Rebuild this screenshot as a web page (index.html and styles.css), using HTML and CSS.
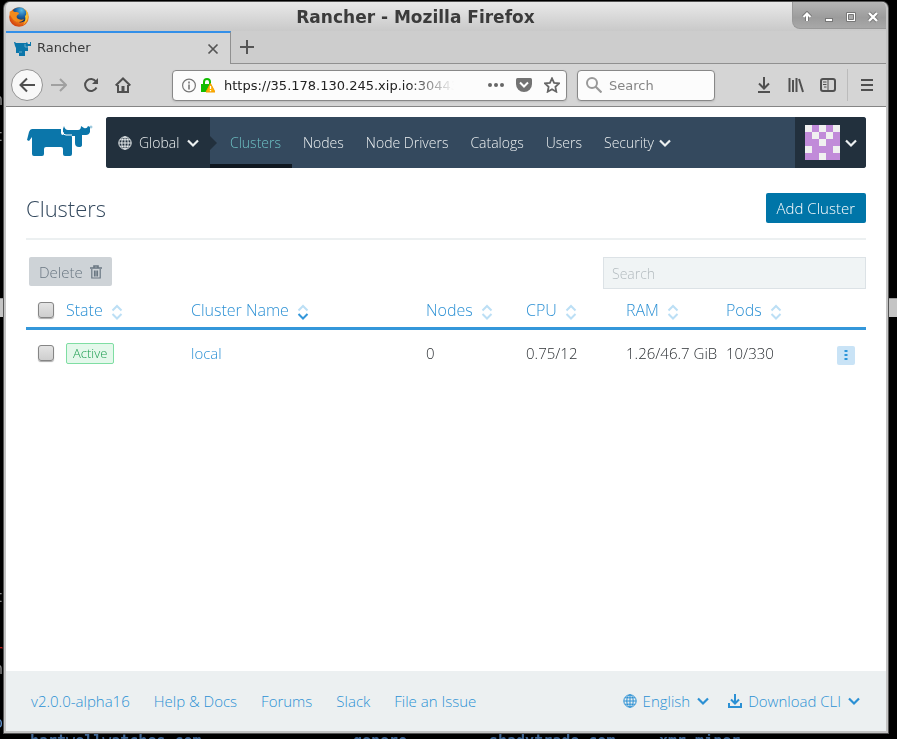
FILE: index.html
```html
<!DOCTYPE html>
<html lang="en">
<head>
<meta charset="utf-8">
<title>Rancher</title>
<link rel="stylesheet" href="styles.css">
</head>
<body>
<svg class="sprite" aria-hidden="true">
  <symbol id="chevron" viewBox="0 0 14 14"><path d="M2 4.500l5 5 5-5" fill="none" stroke="currentColor" stroke-width="2.200"/></symbol>
  <symbol id="globe" viewBox="0 0 14 14"><g fill="none" stroke="currentColor"><circle cx="7" cy="7" r="6.200"/><ellipse cx="7" cy="7" rx="3.200" ry="6.200"/><path d="M7 1v12M1 7h12M2 3.800h10M2 10.200h10"/></g></symbol>
  <symbol id="sort" viewBox="0 0 12 16"><g fill="none" stroke="currentColor" stroke-width="2"><path d="M1.500 6.500L6 2l4.500 4.500"/><path d="M1.500 10L6 14.500 10.500 10"/></g></symbol>
</svg>
<pre class="terminal terminal-upper" aria-hidden="true">n

t</pre>
<pre class="terminal terminal-lower" aria-hidden="true">t


<span class="error">r</span>
n


<span class="entry">o</span></pre>
<div class="terminal terminal-bottom" aria-hidden="true"><span>hartwellwatches.com</span><span>genero</span><span>shadytrade.com</span><span>xmr miner</span></div>
<div class="terminal-band" aria-hidden="true"></div>
<div class="window">
  <header class="titlebar">
    <svg class="firefox" viewBox="0 0 20 20"><defs><radialGradient id="fox" cx=".65" cy=".3" r=".8"><stop offset="0" stop-color="#ffd23a"/><stop offset=".5" stop-color="#f4851b"/><stop offset="1" stop-color="#c9330c"/></radialGradient><radialGradient id="sea" cx=".6" cy=".2" r=".8"><stop offset="0" stop-color="#58b9e4"/><stop offset=".5" stop-color="#1c66a9"/><stop offset="1" stop-color="#10264f"/></radialGradient></defs><circle cx="10" cy="10" r="9.800" fill="url(#fox)"/><path d="M4 3C7 0 13-1 16 3c3 3 3 8 0 11-3 2-7 2-9-1z" fill="url(#sea)"/><path d="M1 4c1 1 3 0 5 1 2 0 4 0 4 2-2 1-3 2-2 4 2 2 5 2 7 1-2 4-9 4-12-1C1 9 0 6 1 4z" fill="#f28a1c"/><path d="M17 3c3 4 3 11-3 15 2-3 3-6 2-9 2-1 1-4 1-6z" fill="#fbc231"/></svg>
    <h2 class="window-title">Rancher - Mozilla Firefox</h2>
    <div class="window-buttons">
      <button aria-label="Shade"><svg viewBox="0 0 12 12"><path d="M6 10V3M2.500 6L6 2.500 9.500 6" fill="none" stroke="#777" stroke-width="4"/><path d="M6 10V3M2.500 6L6 2.500 9.500 6" fill="none" stroke="#fff" stroke-width="2"/></svg></button>
      <button aria-label="Minimize"><svg viewBox="0 0 12 12"><rect x="2.500" y="7.500" width="7" height="3" fill="#fff" stroke="#777"/></svg></button>
      <button aria-label="Maximize"><svg viewBox="0 0 12 12"><path d="M1.500 1.500h9v9h-9z" fill="#fff" stroke="#777"/><path d="M3.500 3.500h5v5h-5z" fill="#aaa" stroke="#777"/></svg></button>
      <button aria-label="Close"><svg viewBox="0 0 12 12"><path d="M2 2l8 8M10 2l-8 8" stroke="#777" stroke-width="4"/><path d="M2 2l8 8M10 2l-8 8" stroke="#fff" stroke-width="2.400"/></svg></button>
    </div>
  </header>
  <div class="tabs">
    <div class="tab">
      <svg class="favicon" viewBox="0 0 18 16"><path d="M0 1h1l1 1h10l1-1 1 2h2V1h1v4h-3v5h-3v5H5v-3H2V7L1 5z" fill="#0b76aa"/><path d="M5 11h3M11 3v3h3" fill="none" stroke="#7cb6d0" stroke-width=".800"/></svg>
      <span>Rancher</span>
      <button aria-label="Close tab"><svg viewBox="0 0 12 12"><path d="M1.500 1.500l9 9M10.500 1.500l-9 9" stroke="#555" stroke-width="1.700"/></svg></button>
    </div>
    <button class="new-tab" aria-label="New tab"><svg viewBox="0 0 14 14"><path d="M7 0v14M0 7h14" stroke="#555" stroke-width="2"/></svg></button>
  </div>
  <div class="toolbar">
    <button class="back" aria-label="Back"><svg viewBox="0 0 16 16"><path d="M16 8H1.500M8 1.500L1.500 8 8 14.500" fill="none" stroke="#505050" stroke-width="2"/></svg></button>
    <button class="tool" aria-label="Forward"><svg viewBox="0 0 16 16"><path d="M0 8h14.500M9 2l6 6-6 6" fill="none" stroke="#a0a0a0" stroke-width="2"/></svg></button>
    <button class="tool" aria-label="Reload"><svg viewBox="0 0 16 16"><path d="M13.500 10.500A6 6 0 1 1 13 4.500" fill="none" stroke="#505050" stroke-width="2"/><path d="M15 1v6H9z" fill="#505050"/></svg></button>
    <button class="tool" aria-label="Home"><svg viewBox="0 0 16 16"><path d="M.700 8.500L8 1.500l7.300 7M3 8v7h10V8" fill="none" stroke="#505050" stroke-width="2"/><path d="M6.500 9h3v6h-3z" fill="#505050"/></svg></button>
    <div class="address">
      <svg viewBox="0 0 14 14"><circle cx="7" cy="7" r="6.400" fill="none" stroke="#777" stroke-width="1.200"/><path d="M7 6v5M7 3v2" stroke="#777" stroke-width="1.600"/></svg>
      <svg class="lock" viewBox="0 0 14 15"><path d="M3 7V4a3 3 0 0 1 6 0v3" fill="none" stroke="#12bc00" stroke-width="2"/><path d="M0 6h8v8H0z" fill="#12bc00"/><path d="M9.500 5.500L14 14H5z" fill="#ffb000" stroke="#f29d00"/><path d="M9.500 8v3M9.500 12v1.300" stroke="#fff" stroke-width="1.300"/></svg>
      <input class="url" aria-label="Address" value="https://35.178.130.245.xip.io:30443">
      <button aria-label="Page actions"><svg viewBox="0 0 16 16"><g fill="#666"><circle cx="2" cy="8" r="2"/><circle cx="8" cy="8" r="2"/><circle cx="14" cy="8" r="2"/></g></svg></button>
      <button aria-label="Save to Pocket"><svg viewBox="0 0 16 16"><path d="M1.500 1h13Q16 1 16 2.500V7a8 8 0 0 1-16 0V2.500Q0 1 1.500 1z" fill="#737373"/><path d="M4 5.500l4 4 4-4" fill="none" stroke="#fff" stroke-width="2"/></svg></button>
      <button aria-label="Bookmark"><svg viewBox="0 0 16 16"><path d="M8 1.300l2.100 4.500 4.900.6-3.600 3.400.9 4.900L8 12.300l-4.300 2.400.9-4.900L1 6.400l4.900-.6z" fill="none" stroke="#666" stroke-width="1.800"/></svg></button>
    </div>
    <label class="websearch"><svg viewBox="0 0 16 16"><circle cx="6" cy="6" r="5" fill="none" stroke="#999" stroke-width="2"/><path d="M9.500 9.500l6 6" stroke="#999" stroke-width="2.200"/></svg><input aria-label="Web search" placeholder="Search"></label>
    <div class="tools">
      <button aria-label="Downloads"><svg viewBox="0 0 16 16"><path d="M8 0v11M3 6.500l5 5 5-5M2 15h12" fill="none" stroke="#505050" stroke-width="2"/></svg></button>
      <button aria-label="Library"><svg viewBox="0 0 16 16"><path d="M1.500 1v14M5 3v12M8.500 1v14M11 2l4 13" fill="none" stroke="#505050" stroke-width="2"/></svg></button>
      <button aria-label="Sidebar"><svg viewBox="0 0 16 16"><rect x="1" y="2" width="14" height="12" rx="2" fill="none" stroke="#505050" stroke-width="2"/><path d="M8 2v12M3 5h3.500M3 7.500h3.500M4 10h2.500" stroke="#505050"/></svg></button>
    </div>
    <button class="menu" aria-label="Menu"><svg viewBox="0 0 12 12"><path d="M0 1h12M0 6h12M0 11h12" stroke="#505050" stroke-width="2"/></svg></button>
  </div>
  <div class="page">
    <div class="nav-row">
      <a class="logo" href="#" aria-label="Rancher"><svg viewBox="0 0 67 32"><path d="M6 4h29v4q0 2 2 2h7q2 0 2 2v17q0 2-2 2h-5q-2 0-2-2v-5q0-2-2-2H20q-2 0-2 2v5q0 2-2 2h-8q-2 0-2-2V12l-3 4-2-1 2-8q1-3 3-3z" fill="#0b76aa"/><path d="M38 1q1 4 4 4h10q3 0 3-4l3 2q3 1 4-2l2 1v5q-1 3-4 3h-4v10q0 2-3 2-4 0-4-4v-7H40q-3 0-3-3V4z" fill="#0b76aa"/><path d="M37 7q0 3 3 3h6" fill="none" stroke="#fff"/><circle cx="65" cy="2" r="1" fill="none" stroke="#59a3c5" stroke-width=".700"/></svg></a>
      <nav class="nav">
        <button class="scope"><svg class="icon"><use href="#globe"/></svg><span>Global</span><svg class="icon"><use href="#chevron"/></svg></button>
        <a class="active" href="#">Clusters</a><a href="#">Nodes</a><a href="#">Node Drivers</a><a href="#">Catalogs</a><a href="#">Users</a>
        <button class="security">Security <svg class="icon"><use href="#chevron"/></svg></button>
        <button class="user" aria-label="Account"><svg class="avatar" viewBox="0 0 5 5" shape-rendering="crispEdges"><path d="M0 0h5v5H0z" fill="#c18bd9"/><path d="M0 0h1v1H0zM2 0h1v1H2zM4 0h1v1H4zM1 1h1v1H1zM3 1h1v1H3zM2 2h1v1H2zM0 3h1v1H0zM4 3h1v1H4zM2 4h1v1H2z" fill="#f0f0f0"/></svg><svg class="icon"><use href="#chevron"/></svg></button>
      </nav>
    </div>
    <main>
      <div class="heading"><h1>Clusters</h1><button class="add">Add Cluster</button></div>
      <div class="filters">
        <button class="delete" disabled>Delete <svg viewBox="0 0 12 14"><path d="M0 3h12M4 2.500V1h4v1.500" fill="none" stroke="currentColor" stroke-width="1.600"/><path d="M1.800 4v9h8.400V4M4.500 5.500v6M6 5.500v6M7.500 5.500v6" fill="none" stroke="currentColor" stroke-width="1.200"/></svg></button>
        <input class="search" type="search" aria-label="Search clusters" placeholder="Search">
      </div>
      <table>
        <colgroup><col class="c-check"><col class="c-state"><col><col class="c-num"><col class="c-num"><col class="c-num"><col class="c-num"><col class="c-check"></colgroup>
        <thead><tr>
          <th class="check"><input type="checkbox" aria-label="Select all"></th>
          <th><button>State <svg><use href="#sort"/></svg></button></th>
          <th><button>Cluster Name <svg viewBox="0 0 12 16"><g fill="none" stroke-width="2"><path d="M1.500 6.500L6 2l4.500 4.500" stroke="#bcdff5"/><path d="M1.500 10L6 14.500 10.500 10" stroke="#3497da"/></g></svg></button></th>
          <th><button>Nodes <svg><use href="#sort"/></svg></button></th>
          <th><button>CPU <svg><use href="#sort"/></svg></button></th>
          <th><button>RAM <svg><use href="#sort"/></svg></button></th>
          <th><button>Pods <svg><use href="#sort"/></svg></button></th>
          <th></th>
        </tr></thead>
        <tbody><tr>
          <td class="check"><input type="checkbox" aria-label="Select local"></td>
          <td><span class="badge">Active</span></td>
          <td><a href="#">local</a></td>
          <td>0</td><td>0.75/12</td><td>1.26/46.7 GiB</td><td>10/330</td>
          <td><button class="actions" aria-label="Actions"><svg viewBox="0 0 4 12"><path d="M.500 1h3v2h-3zM.500 5h3v2h-3zM.500 9h3v2h-3z" fill="#2b95da"/></svg></button></td>
        </tr></tbody>
      </table>
    </main>
    <footer>
      <a href="#">v2.0.0-alpha16</a><a href="#">Help &amp; Docs</a><a href="#">Forums</a><a href="#">Slack</a><a href="#">File an Issue</a>
      <button class="language"><svg class="icon"><use href="#globe"/></svg>English<svg class="icon"><use href="#chevron"/></svg></button>
      <button><svg class="icon" viewBox="0 0 14 14"><path d="M7 0v9M3 5.500l4 4 4-4M1 9v4h12V9" fill="none" stroke="currentColor" stroke-width="2"/></svg>Download CLI<svg class="icon"><use href="#chevron"/></svg></button>
    </footer>
  </div>
</div>
</body>
</html>
```
FILE: styles.css
```css
* { box-sizing: border-box; }
body { margin: 0; background: #000; font-family: "DejaVu Sans", sans-serif; }
button { padding: 0; border: 0; background: none; font: inherit; color: inherit; cursor: pointer; }
input { font: inherit; border: 0; min-width: 0; }
a { color: #3497da; text-decoration: none; }
svg { display: block; flex: none; }
.sprite { position: absolute; width: 0; height: 0; }

.terminal { position: fixed; margin: 0; color: #8a8a8a; font: 15px/18px "DejaVu Sans Mono", monospace; white-space: pre; }
.terminal-upper { left: -6px; top: 91px; }
.terminal-lower { left: -6px; bottom: 7px; }
.error { color: #c01818; }
.entry { color: #5f8fc8; }
.terminal-bottom { left: 30px; bottom: -11px; display: grid; grid-template-columns: 323px 136px 170px auto; color: #3f6695; font-weight: bold; }
.terminal-band { position: fixed; left: 0; right: 0; top: 298px; height: 19px; background: #c4c4c4; border-top: 1px solid #999; }

.window { position: relative; display: flex; flex-direction: column; min-height: calc(100vh - 8px); margin: 2px 9px 6px 4px; border: 2px solid #c4c4c4; border-top: 0; border-radius: 6px 6px 0 0; background: #cdcdcd; box-shadow: 0 0 0 1px #555; overflow: hidden; }
.titlebar { display: flex; align-items: flex-start; height: 29px; background: linear-gradient(#e9e9e9, #c9c9c9); }
.firefox { width: 20px; height: 20px; margin: 5px 0 0 3px; }
.window-title { flex: 1; margin: 0; padding-left: 10px; font-size: 17px; line-height: 30px; text-align: center; color: #3b3b3b; }
.window-buttons { display: flex; gap: 10px; height: 27px; padding: 9px 7px 0 8px; border: 1px solid #999; border-width: 0 0 1px 1px; border-radius: 0 0 0 8px; background: linear-gradient(#b5b5b5, #9c9c9c 60%, #a8a8a8); }
.window-buttons button, .window-buttons svg { width: 12px; height: 12px; }

.tabs { display: flex; height: 33px; border-bottom: 1px solid #909090; }
.tab { display: flex; align-items: center; gap: 5px; width: 225px; height: 33px; padding: 0 11px 0 8px; border-top: 2px solid #338fe8; border-right: 1px solid #909090; background: #d5d5d5; color: #3b3b3b; font-size: 13px; }
.tab span { flex: 1; padding-bottom: 2px; }
.tab svg { width: 12px; height: 12px; }
.tab .favicon { width: 18px; height: 16px; }
.new-tab { margin-left: 9px; }
.new-tab svg { width: 14px; height: 14px; }

.toolbar { display: flex; align-items: center; height: 43px; padding-left: 5px; border-bottom: 1px solid #858585; background: #d5d5d5; }
.toolbar svg { width: 16px; height: 16px; }
.back { display: grid; place-items: center; width: 32px; height: 32px; border: 1px solid #949494; border-radius: 50%; background: #f8f8f8; }
.tool { margin-left: 8px; }
.tool + .tool { margin-left: 16px; }
.address, .websearch { display: flex; align-items: center; height: 31px; border: 1px solid #888; border-radius: 4px; background: #fcfcfc; box-shadow: 0 1px 2px #bbb; font-size: 13px; color: #333; }
.address { flex: 1; min-width: 0; margin: 0 10px 0 41px; padding: 0 6px 0 9px; gap: 12px; }
.address svg:not(button svg) { width: 14px; height: 15px; }
.address .lock { margin-left: -7px; }
.url { flex: 1; margin-left: -3px; margin-right: 22px; padding: 0; background: none; color: #222; -webkit-mask-image: linear-gradient(to right, #000 80%, transparent); mask-image: linear-gradient(to right, #000 80%, transparent); }
.websearch { width: 138px; padding: 0 8px; gap: 7px; }
.websearch input { flex: 1; padding: 0; background: none; }
.websearch input::placeholder { color: #858585; opacity: 1; }
.tools { display: flex; align-items: center; gap: 16px; height: 32px; margin-left: 41px; padding-right: 11px; border-right: 1px solid #bbb; }
.toolbar .menu svg { width: 12px; height: 12px; }
.menu { margin: 0 13px; }

.page { display: flex; flex: 1; flex-direction: column; background: #fff; font-family: "Open Sans", "Noto Sans", sans-serif; font-weight: 300; font-size: 14px; color: #2c3034; }
.icon { width: 14px; height: 14px; }
.nav-row { display: flex; margin: 10px 20px 0; }
.logo { width: 80px; padding-top: 8px; }
.logo svg { width: 67px; height: 32px; }
.nav { display: flex; flex: 1; height: 51px; border-radius: 3px; overflow: hidden; background: #34495e; color: #ecf0f1; }
.nav a, .security { display: flex; align-items: center; padding: 0 11px; color: #ecf0f1; }
.nav .active { padding: 4px 11px 0 20px; border-bottom: 4px solid #101820; color: #6dc0c4; }
.scope { position: relative; display: flex; align-items: center; gap: 7px; width: 104px; padding-left: 12px; background: #22303d; }
.scope::after { content: ""; position: absolute; left: 100%; border: 7px solid transparent; border-left-color: #22303d; border-right-width: 0; }
.security { gap: 4px; }
.user { display: flex; align-items: center; gap: 4px; width: 71px; margin-left: auto; padding-left: 10px; background: #22303d; }
.avatar { width: 35px; height: 35px; }

main { flex: 1; padding: 0 20px; }
.heading { display: flex; align-items: center; justify-content: space-between; height: 72px; padding-top: 9px; border-bottom: 2px solid #ecf0f1; }
h1 { margin: 0; font-size: 22px; line-height: 28px; font-weight: 300; color: #34495e; }
.add { height: 30px; padding: 0 11px; border-radius: 2px; background: #0075a8; color: #fff; font-size: 15px; }
.filters { display: flex; align-items: flex-start; justify-content: space-between; margin-top: 17px; padding-left: 3px; }
.delete { display: flex; align-items: center; gap: 7px; height: 29px; padding: 0 10px; border-radius: 2px; background: #ced3d7; color: #6a7782; font-size: 15px; }
.delete svg { width: 12px; height: 14px; }
.search { width: 263px; height: 32px; padding: 0 8px; border: 1px solid #dce2e6; border-radius: 0; background: #f0f4f5; }
.search::placeholder { color: #b3bbbf; opacity: 1; }

table { width: 100%; table-layout: fixed; border-collapse: collapse; font-size: 15px; }
.c-check { width: 40px; }
.c-state { width: 125px; }
.c-num { width: 100px; }
th, td { padding: 0; font-weight: 300; text-align: left; white-space: nowrap; vertical-align: middle; }
th { height: 39px; padding-top: 5px; border-bottom: 3px solid #3497da; color: #2b90d4; }
th button { display: flex; align-items: center; gap: 8px; font-size: 16px; }
th svg { width: 12px; height: 16px; margin-top: 3px; color: #bcdff5; }
td { height: 49px; }
td a, footer a { color: #2b90d4; }
.check { padding-left: 12px; }
.check input { display: block; appearance: none; width: 16px; height: 16px; margin: 0; border: 1px solid #858585; border-radius: 3px; background: linear-gradient(#e4e4e4, #cecece); box-shadow: 0 1px 1px #aaa; }
.badge { display: inline-block; padding: 0 6px; border: 1px solid #7fdea3; border-radius: 2px; background: #e4f8eb; color: #1f9e52; font-size: 13px; line-height: 19px; vertical-align: middle; }
.actions { display: grid; place-items: center; width: 18px; height: 19px; margin: 4px 0 0 11px; border-radius: 2px; background: #c9e3f6; }
.actions svg { width: 4px; height: 12px; }

footer { display: flex; align-items: center; gap: 24px; height: 60px; padding: 0 25px; background: #ecf0f1; font-size: 15px; white-space: nowrap; }
footer button { display: flex; align-items: center; gap: 6px; margin-left: -6px; color: #2b90d4; }
footer .language { margin-left: auto; }
```
